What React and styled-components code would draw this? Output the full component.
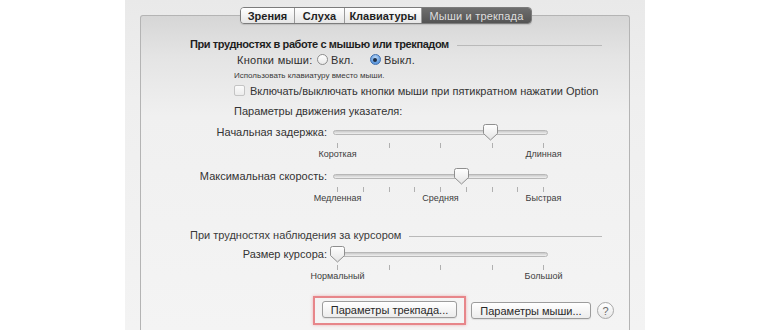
import React from "react";
import styled, { createGlobalStyle } from "styled-components";

const GlobalStyle = createGlobalStyle`
  html, body {
    margin: 0;
    padding: 0;
    background: #ffffff;
  }
  body {
    font-family: "Liberation Sans", "DejaVu Sans", Arial, sans-serif;
    color: #2e2e2e;
    overflow: hidden;
  }
`;

const tabs = [
  { label: "Зрения", w: 53 },
  { label: "Слуха", w: 49 },
  { label: "Клавиатуры", w: 76 },
  { label: "Мыши и трекпада", w: 109, active: true },
];

const sliders = {
  delay: {
    label: "Начальная задержка:",
    value: 0.74,
    ticks: 5,
    marks: ["Короткая", "Длинная"],
  },
  speed: {
    label: "Максимальная скорость:",
    value: 0.6,
    ticks: 9,
    marks: ["Медленная", "Средняя", "Быстрая"],
  },
  cursor: {
    label: "Размер курсора:",
    value: 0,
    ticks: 5,
    marks: ["Нормальный", "Большой"],
  },
};

const Thumb = ({ pos }) => (
  <ThumbWrap style={{ left: `${4 + pos * 207}px` }}>
    <svg width="15" height="17" viewBox="0 0 15 17">
      <defs>
        <linearGradient id="thumbFill" x1="0" y1="0" x2="0" y2="1">
          <stop offset="0" stopColor="#ffffff" />
          <stop offset="1" stopColor="#e4e4e4" />
        </linearGradient>
      </defs>
      <path
        d="M2.5 0.5 H12.5 Q14.5 0.5 14.5 2.5 V9.5 L7.5 16 L0.5 9.5 V2.5 Q0.5 0.5 2.5 0.5 Z"
        fill="url(#thumbFill)"
        stroke="#8f8f8f"
        strokeWidth="1"
      />
    </svg>
  </ThumbWrap>
);

const Slider = ({ data }) => (
  <SliderRow>
    <RowLabel>{data.label}</RowLabel>
    <SliderBody>
      <TrackArea>
        <Track />
        <Thumb pos={data.value} />
      </TrackArea>
      <Ticks>
        {Array.from({ length: data.ticks }).map((_, i) => (
          <Tick key={i} />
        ))}
      </Ticks>
      <Marks>
        {data.marks.map((m) => (
          <Mark key={m}>
            <span>{m}</span>
          </Mark>
        ))}
      </Marks>
    </SliderBody>
  </SliderRow>
);

const App = () => {
  return (
    <>
      <GlobalStyle />
      <Window>
        <TabBar>
          {tabs.map((t) => (
            <Tab key={t.label} $w={t.w} $active={t.active}>
              {t.label}
            </Tab>
          ))}
        </TabBar>
        <Panel>
          <Header $top={0}>
            <span>При трудностях в работе с мышью или трекпадом</span>
            <Rule />
          </Header>

          <RadioRow>
            <RadioLabel>Кнопки мыши:</RadioLabel>
            <RadioOption>
              <Radio />
              Вкл.
            </RadioOption>
            <RadioOption>
              <Radio $on>
                <Dot />
              </Radio>
              Выкл.
            </RadioOption>
          </RadioRow>

          <Hint>Использовать клавиатуру вместо мыши.</Hint>

          <CheckRow>
            <Checkbox />
            Включать/выключать кнопки мыши при пятикратном нажатии Option
          </CheckRow>

          <SubTitle>Параметры движения указателя:</SubTitle>

          <SliderGroup $top={6}>
            <Slider data={sliders.delay} />
          </SliderGroup>
          <SliderGroup $top={8}>
            <Slider data={sliders.speed} />
          </SliderGroup>

          <Header $top={24} $light>
            <span>При трудностях наблюдения за курсором</span>
            <Rule />
          </Header>

          <SliderGroup $top={5}>
            <Slider data={sliders.cursor} />
          </SliderGroup>

          <ButtonRow>
            <Highlight>
              <Button $w={135}>Параметры трекпада...</Button>
            </Highlight>
            <Button $w={120}>Параметры мыши...</Button>
            <HelpButton>?</HelpButton>
          </ButtonRow>
        </Panel>
      </Window>
    </>
  );
};

const Window = styled.div`
  margin-left: 125px;
  width: 520px;
  height: 330px;
  padding-top: 7px;
  box-sizing: border-box;
  background: linear-gradient(#e9e9e9 0%, #efefef 30%, #f3f3f3 100%);
  overflow: hidden;
  display: flex;
  flex-direction: column;
`;

const TabBar = styled.div`
  display: flex;
  align-self: flex-start;
  margin-left: 115px;
  height: 17px;
  box-sizing: border-box;
  border: 1px solid #7c7c7c;
  border-radius: 4px;
  overflow: hidden;
  position: relative;
  z-index: 1;
  box-shadow: 0 1px 1px rgba(0, 0, 0, 0.12);
`;

const Tab = styled.div`
  width: ${(p) => p.$w}px;
  display: flex;
  align-items: center;
  justify-content: center;
  font-size: 11px;
  font-weight: ${(p) => (p.$active ? 400 : 700)};
  letter-spacing: ${(p) => (p.$active ? "0.2px" : "0")};
  color: ${(p) => (p.$active ? "#dedede" : "#1f1f1f")};
  background: ${(p) =>
    p.$active
      ? "linear-gradient(#6e6e6e, #545454)"
      : "linear-gradient(#ffffff, #e6e6e6)"};
  border-left: 1px solid #9a9a9a;
  &:first-child {
    border-left: none;
  }
`;

const Panel = styled.div`
  margin: -9px 15px 0 15px;
  flex: 1;
  border: 1px solid #b4b4b4;
  border-bottom: none;
  border-radius: 3px 3px 0 0;
  background: linear-gradient(#d6d6d6 0px, #e4e4e4 40px, #f0f0f0 100px, #f4f4f4 100%);
  padding: 21px 27px 0 49px;
  display: flex;
  flex-direction: column;
`;

const Header = styled.div`
  margin-top: ${(p) => p.$top}px;
  display: flex;
  align-items: center;
  height: 13px;
  font-size: 11px;
  font-weight: ${(p) => (p.$light ? 400 : 700)};
  letter-spacing: ${(p) => (p.$light ? "0" : "-0.4px")};
  color: ${(p) => (p.$light ? "#3a3a3a" : "#1e1e1e")};
  white-space: nowrap;
`;

const Rule = styled.div`
  flex: 1;
  height: 1px;
  margin-left: 8px;
  margin-top: 3px;
  background: #b9b9b9;
`;

const RadioRow = styled.div`
  margin: 3px 0 0 47px;
  display: flex;
  align-items: center;
  height: 13px;
  font-size: 11px;
  letter-spacing: 0.3px;
  color: #2e2e2e;
`;

const RadioLabel = styled.span`
  width: 80px;
  flex-shrink: 0;
  white-space: nowrap;
`;

const RadioOption = styled.div`
  display: flex;
  align-items: center;
  gap: 3px;
  margin-right: 16px;
`;

const Radio = styled.div`
  width: 11px;
  height: 11px;
  box-sizing: border-box;
  border-radius: 50%;
  border: 1px solid ${(p) => (p.$on ? "#3f6fae" : "#8d8d8d")};
  background: ${(p) =>
    p.$on
      ? "radial-gradient(circle at 50% 30%, #b9d6f5, #5d98dd 70%)"
      : "linear-gradient(#ffffff, #e9e9e9)"};
  display: flex;
  align-items: center;
  justify-content: center;
`;

const Dot = styled.div`
  width: 4px;
  height: 4px;
  border-radius: 50%;
  background: #1d2d44;
`;

const Hint = styled.div`
  margin: 4px 0 0 44px;
  font-size: 8px;
  line-height: 11px;
  color: #3a3a3a;
`;

const CheckRow = styled.div`
  margin: 3px 0 0 44px;
  display: flex;
  align-items: center;
  gap: 5px;
  height: 13px;
  font-size: 11px;
  color: #333333;
  white-space: nowrap;
`;

const Checkbox = styled.div`
  width: 11px;
  height: 11px;
  box-sizing: border-box;
  border: 1px solid #c4c4c4;
  border-radius: 2px;
  background: linear-gradient(#fbfbfb, #ececec);
`;

const SubTitle = styled.div`
  margin: 8px 0 0 44px;
  height: 13px;
  line-height: 13px;
  font-size: 11px;
  color: #333333;
`;

const SliderGroup = styled.div`
  margin-top: ${(p) => p.$top}px;
`;

const SliderRow = styled.div`
  display: grid;
  grid-template-columns: 137px 215px;
  column-gap: 6px;
  align-items: start;
`;

const RowLabel = styled.div`
  text-align: right;
  font-size: 11px;
  line-height: 16px;
  color: #333333;
  white-space: nowrap;
`;

const SliderBody = styled.div`
  display: flex;
  flex-direction: column;
`;

const TrackArea = styled.div`
  position: relative;
  height: 16px;
  display: flex;
  align-items: center;
`;

const Track = styled.div`
  flex: 1;
  height: 5px;
  box-sizing: border-box;
  border: 1px solid #b7b7b7;
  border-radius: 3px;
  background: linear-gradient(#c9c9c9, #f0f0f0);
`;

const ThumbWrap = styled.div`
  position: absolute;
  top: 0;
  width: 15px;
  height: 17px;
  transform: translateX(-7px);
  display: flex;
`;

const Ticks = styled.div`
  margin-top: 3px;
  height: 5px;
  padding: 0 4px;
  display: flex;
  justify-content: space-between;
`;

const Tick = styled.div`
  width: 1px;
  height: 100%;
  background: #b0b0b0;
`;

const Marks = styled.div`
  margin-top: 1px;
  padding: 0 4px;
  display: flex;
  justify-content: space-between;
`;

const Mark = styled.div`
  width: 1px;
  display: flex;
  justify-content: center;
  font-size: 9px;
  line-height: 11px;
  color: #3d3d3d;
  white-space: nowrap;
`;

const ButtonRow = styled.div`
  margin: 14px -40px 0 123px;
  display: flex;
  align-items: center;
  & > * {
    flex-shrink: 0;
  }
`;

const Highlight = styled.div`
  padding: 3px 7px 5px 7px;
  border: 2px solid #e7868a;
  box-shadow: 0 0 3px rgba(231, 120, 124, 0.55);
  margin-right: 5px;
  display: flex;
`;

const Button = styled.div`
  width: ${(p) => p.$w}px;
  height: 17px;
  box-sizing: border-box;
  border: 1px solid #9c9c9c;
  border-radius: 3px;
  background: linear-gradient(#ffffff, #ececec);
  box-shadow: 0 1px 1px rgba(0, 0, 0, 0.08);
  display: flex;
  align-items: center;
  justify-content: center;
  font-size: 11px;
  color: #2a2a2a;
  white-space: nowrap;
`;

const HelpButton = styled.div`
  margin-left: 6px;
  width: 17px;
  height: 17px;
  box-sizing: border-box;
  border-radius: 50%;
  border: 1px solid #a8a8a8;
  background: linear-gradient(#ffffff, #e8e8e8);
  display: flex;
  align-items: center;
  justify-content: center;
  font-size: 11px;
  color: #6a6a6a;
`;

export default App;
